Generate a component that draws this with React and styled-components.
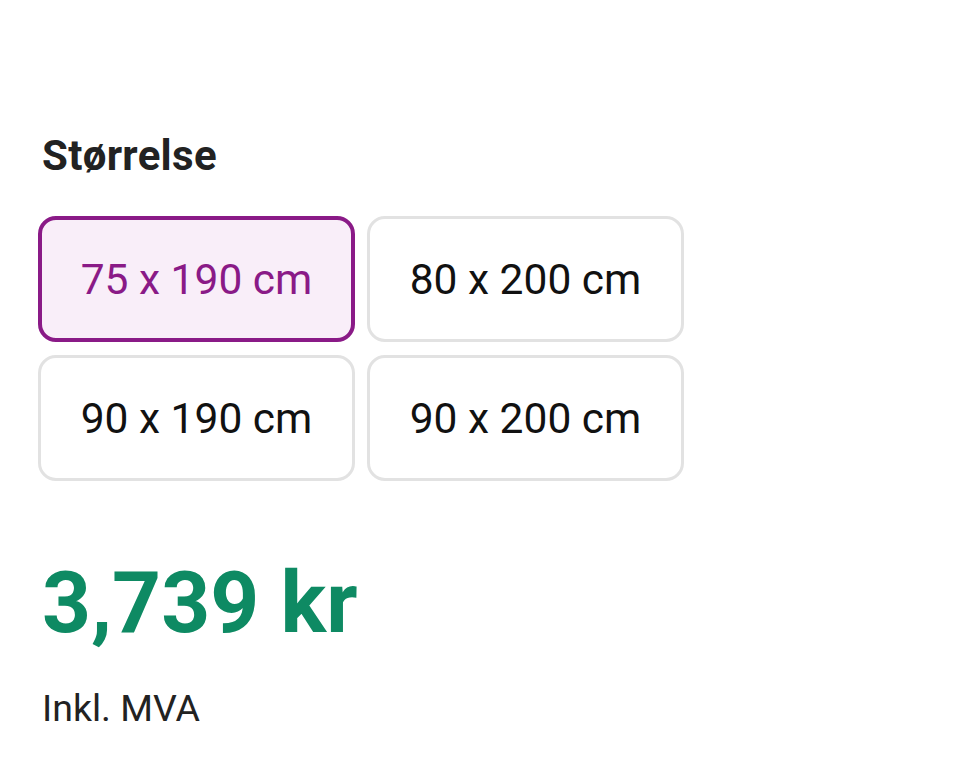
import React, { useState } from 'react';
import styled, { createGlobalStyle } from 'styled-components';

const Global = createGlobalStyle`
  html, body {
    margin: 0;
    padding: 0;
    background: #fff;
    font-family: Roboto, "Liberation Sans", sans-serif;
  }
`

const Page = styled.div`
  width: 960px;
  height: 774px;
  box-sizing: border-box;
  padding: 128px 0 0 38px;
  display: flex;
  flex-direction: column;
`

const Title = styled.h2`
  margin: 0 0 0 4px;
  font-size: 42px;
  line-height: 56px;
  letter-spacing: 0.3px;
  font-weight: 700;
  color: #222;
`

const Sizes = styled.div`
  display: grid;
  grid-template-columns: 317px 317px;
  grid-auto-rows: 126px;
  column-gap: 12px;
  row-gap: 13px;
  margin-top: 32px;
`

const SizeButton = styled.button`
  box-sizing: border-box;
  border-radius: 18px;
  border: ${p => p.$active ? '4px solid #8a1a87' : '3px solid #e2e2e2'};
  background: ${p => p.$active ? '#f9eef9' : '#fff'};
  color: ${p => p.$active ? '#8a1a87' : '#111'};
  font-family: Roboto, "Liberation Sans", sans-serif;
  font-size: 42.5px;
  font-weight: 400;
  display: flex;
  align-items: center;
  justify-content: center;
  padding: 0;
  cursor: pointer;
`

const Price = styled.div`
  margin: 72px 0 0 4px;
  font-size: 85.5px;
  line-height: 100px;
  font-weight: 700;
  color: #0e8a63;
`

const Note = styled.div`
  margin: 33px 0 0 4px;
  font-size: 37.5px;
  line-height: 44px;
  color: #222;
`

const sizes = ['75 x 190 cm', '80 x 200 cm', '90 x 190 cm', '90 x 200 cm']

export default function App() {
  const [selected, setSelected] = useState(0)
  return <Page>
    <Global />
    <Title>Størrelse</Title>
    <Sizes>
      {sizes.map((s, i) =>
        <SizeButton key={s} $active={i === selected} onClick={() => setSelected(i)}>{s}</SizeButton>
      )}
    </Sizes>
    <Price>3,739 kr</Price>
    <Note>Inkl. MVA</Note>
  </Page>
}
